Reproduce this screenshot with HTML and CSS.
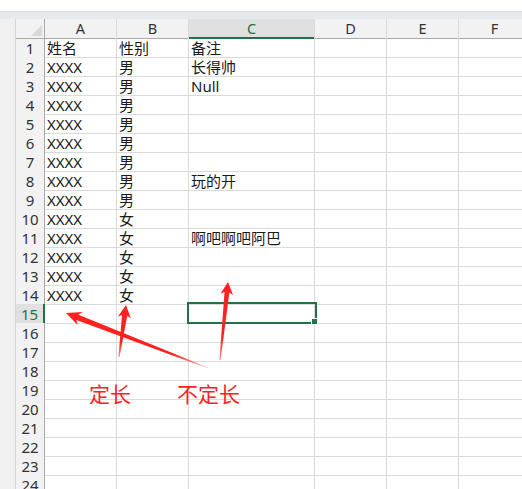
FILE: index.html
```html
<!DOCTYPE html>
<html lang="zh-CN">
<head>
<meta charset="utf-8">
<title>工作表</title>
<link rel="stylesheet" href="styles.css">
</head>
<body>
<div class="window">
  <div class="topbar"></div>
  <div class="band"></div>
  <div class="sheet">
    <div class="strip"></div>
    <div class="grid">
      <div class="row head">
        <div class="corner"><span class="tri"></span></div>
        <div class="ch">A</div><div class="ch">B</div><div class="ch active">C</div><div class="ch">D</div><div class="ch">E</div><div class="ch">F</div>
      </div>
      <div class="row"><div class="rh">1</div><div class="c">姓名</div><div class="c">性别</div><div class="c">备注</div><div class="c"></div><div class="c"></div><div class="c"></div></div>
      <div class="row"><div class="rh">2</div><div class="c">XXXX</div><div class="c">男</div><div class="c">长得帅</div><div class="c"></div><div class="c"></div><div class="c"></div></div>
      <div class="row"><div class="rh">3</div><div class="c">XXXX</div><div class="c">男</div><div class="c">Null</div><div class="c"></div><div class="c"></div><div class="c"></div></div>
      <div class="row"><div class="rh">4</div><div class="c">XXXX</div><div class="c">男</div><div class="c"></div><div class="c"></div><div class="c"></div><div class="c"></div></div>
      <div class="row"><div class="rh">5</div><div class="c">XXXX</div><div class="c">男</div><div class="c"></div><div class="c"></div><div class="c"></div><div class="c"></div></div>
      <div class="row"><div class="rh">6</div><div class="c">XXXX</div><div class="c">男</div><div class="c"></div><div class="c"></div><div class="c"></div><div class="c"></div></div>
      <div class="row"><div class="rh">7</div><div class="c">XXXX</div><div class="c">男</div><div class="c"></div><div class="c"></div><div class="c"></div><div class="c"></div></div>
      <div class="row"><div class="rh">8</div><div class="c">XXXX</div><div class="c">男</div><div class="c">玩的开</div><div class="c"></div><div class="c"></div><div class="c"></div></div>
      <div class="row"><div class="rh">9</div><div class="c">XXXX</div><div class="c">男</div><div class="c"></div><div class="c"></div><div class="c"></div><div class="c"></div></div>
      <div class="row"><div class="rh">10</div><div class="c">XXXX</div><div class="c">女</div><div class="c"></div><div class="c"></div><div class="c"></div><div class="c"></div></div>
      <div class="row"><div class="rh">11</div><div class="c">XXXX</div><div class="c">女</div><div class="c">啊吧啊吧阿巴</div><div class="c"></div><div class="c"></div><div class="c"></div></div>
      <div class="row"><div class="rh">12</div><div class="c">XXXX</div><div class="c">女</div><div class="c"></div><div class="c"></div><div class="c"></div><div class="c"></div></div>
      <div class="row"><div class="rh">13</div><div class="c">XXXX</div><div class="c">女</div><div class="c"></div><div class="c"></div><div class="c"></div><div class="c"></div></div>
      <div class="row"><div class="rh">14</div><div class="c">XXXX</div><div class="c">女</div><div class="c"></div><div class="c"></div><div class="c"></div><div class="c"></div></div>
      <div class="row"><div class="rh active">15</div><div class="c"></div><div class="c"></div><div class="c sel"><span class="outline"></span><span class="handle"></span></div><div class="c"></div><div class="c"></div><div class="c"></div></div>
      <div class="row"><div class="rh">16</div><div class="c"></div><div class="c"></div><div class="c"></div><div class="c"></div><div class="c"></div><div class="c"></div></div>
      <div class="row"><div class="rh">17</div><div class="c"></div><div class="c"></div><div class="c"></div><div class="c"></div><div class="c"></div><div class="c"></div></div>
      <div class="row"><div class="rh">18</div><div class="c"></div><div class="c"></div><div class="c"></div><div class="c"></div><div class="c"></div><div class="c"></div></div>
      <div class="row"><div class="rh">19</div><div class="c"></div><div class="c"></div><div class="c"></div><div class="c"></div><div class="c"></div><div class="c"></div></div>
      <div class="row"><div class="rh">20</div><div class="c"></div><div class="c"></div><div class="c"></div><div class="c"></div><div class="c"></div><div class="c"></div></div>
      <div class="row"><div class="rh">21</div><div class="c"></div><div class="c"></div><div class="c"></div><div class="c"></div><div class="c"></div><div class="c"></div></div>
      <div class="row"><div class="rh">22</div><div class="c"></div><div class="c"></div><div class="c"></div><div class="c"></div><div class="c"></div><div class="c"></div></div>
      <div class="row"><div class="rh">23</div><div class="c"></div><div class="c"></div><div class="c"></div><div class="c"></div><div class="c"></div><div class="c"></div></div>
      <div class="row"><div class="rh">24</div><div class="c"></div><div class="c"></div><div class="c"></div><div class="c"></div><div class="c"></div><div class="c"></div></div>
    </div>
  </div>

  <!-- annotation layer: arrows and notes drawn over the sheet -->
  <svg class="marks" width="522" height="489" viewBox="0 0 522 489">
    <defs>
      <linearGradient id="fade1" gradientUnits="userSpaceOnUse" x1="0" y1="0" x2="152" y2="0">
        <stop offset="0" stop-color="#ff2020" stop-opacity="0.15"/>
        <stop offset="0.25" stop-color="#ff2020" stop-opacity="1"/>
        <stop offset="1" stop-color="#ff2020" stop-opacity="1"/>
      </linearGradient>
      <linearGradient id="fade2" gradientUnits="userSpaceOnUse" x1="0" y1="0" x2="52" y2="0">
        <stop offset="0" stop-color="#ff2020" stop-opacity="0.5"/>
        <stop offset="0.3" stop-color="#ff2020" stop-opacity="1"/>
        <stop offset="1" stop-color="#ff2020" stop-opacity="1"/>
      </linearGradient>
      <linearGradient id="fade3" gradientUnits="userSpaceOnUse" x1="0" y1="0" x2="78" y2="0">
        <stop offset="0" stop-color="#ff2020" stop-opacity="0.5"/>
        <stop offset="0.3" stop-color="#ff2020" stop-opacity="1"/>
        <stop offset="1" stop-color="#ff2020" stop-opacity="1"/>
      </linearGradient>
    </defs>
    <!-- tail at origin, tip at (L,0) -->
    <g transform="translate(208 368) rotate(201.17)">
      <polygon fill="url(#fade1)" points="0,-0.5 140,-2.8 137,-7 152.3,0 137,7 140,2.8 0,0.5"/>
    </g>
    <g transform="translate(119 357) rotate(-82.33)">
      <polygon fill="url(#fade2)" points="0,-0.6 42,-2.6 40,-6.5 52.5,0 40,6.5 42,2.6 0,0.6"/>
    </g>
    <g transform="translate(220 360) rotate(-84.14)">
      <polygon fill="url(#fade3)" points="0,-0.6 68,-2.4 66,-6.3 78.4,0 66,6.3 68,2.4 0,0.6"/>
    </g>
  </svg>
  <div class="note note-fixed">定长</div>
  <div class="note note-var">不定长</div>
</div>
</body>
</html>
```

FILE: styles.css
```css
html, body {
  margin: 0;
  padding: 0;
  background: #ffffff;
}

body {
  width: 522px;
  height: 489px;
  overflow: hidden;
  font-family: "Noto Sans", "Noto Sans CJK SC", sans-serif;
  font-size: 15px;
  color: #1a1a1a;
}

.window {
  position: relative;
  width: 522px;
  height: 489px;
  overflow: hidden;
}

.topbar {
  height: 11px;
  background: #ffffff;
}

.band {
  height: 8px;
  box-sizing: border-box;
  background: #e6eaed;
  border-top: 1px solid #d6dbdf;
}

.sheet {
  display: flex;
}

.strip {
  flex: 0 0 15px;
  background: #f0f0f0;
  border-right: 1px solid #d4d4d4;
}

.grid {
  flex: 0 0 auto;
}

.row {
  display: grid;
  grid-template-columns: 29px 72px 72px 126px 72px 72px 72px;
  height: 19px;
}

.row > div {
  box-sizing: border-box;
  border-right: 1px solid #dadada;
  border-bottom: 1px solid #dadada;
  white-space: nowrap;
  overflow: visible;
}

/* column header strip */
.head > div {
  background: #f2f2f2;
  border-bottom-color: #a9a9a9;
  text-align: center;
  line-height: 18px;
  color: #333333;
  font-size: 14.5px;
}

.head .corner {
  position: relative;
  border-right-color: #a9a9a9;
}

.corner .tri {
  position: absolute;
  right: 2px;
  bottom: 2px;
  width: 0;
  height: 0;
  border-left: 11px solid transparent;
  border-bottom: 11px solid #d8d8d8;
}

.head .ch.active {
  background: #e0e0e0;
  border-bottom: 2px solid #217346;
  color: #217346;
}

/* row headers */
.rh {
  background: #f2f2f2;
  border-right-color: #a9a9a9 !important;
  text-align: center;
  line-height: 18px;
  padding-top: 1px;
  color: #333333;
}

.rh.active {
  background: #e0e0e0;
  color: #217346;
  border-right: 2px solid #217346 !important;
}

/* body cells */
.c {
  line-height: 18px;
  padding: 1px 0 0 2px;
  position: relative;
}

.c.sel .outline {
  position: absolute;
  left: -2px;
  top: -2px;
  width: 130px;
  height: 22px;
  box-sizing: border-box;
  border: 2px solid #217346;
  z-index: 2;
}

.c.sel .handle {
  position: absolute;
  left: 122px;
  top: 14px;
  width: 7px;
  height: 7px;
  box-sizing: border-box;
  background: #217346;
  border: 1px solid #ffffff;
  z-index: 3;
}

/* annotations */
.marks {
  position: absolute;
  left: 0;
  top: 0;
  pointer-events: none;
  z-index: 5;
}

.note {
  position: absolute;
  top: 383px;
  font-family: "Noto Sans CJK SC", sans-serif;
  font-size: 21px;
  line-height: 21px;
  color: #ff2121;
  z-index: 6;
}

.note-fixed {
  left: 89px;
}

.note-var {
  left: 177px;
}
```
